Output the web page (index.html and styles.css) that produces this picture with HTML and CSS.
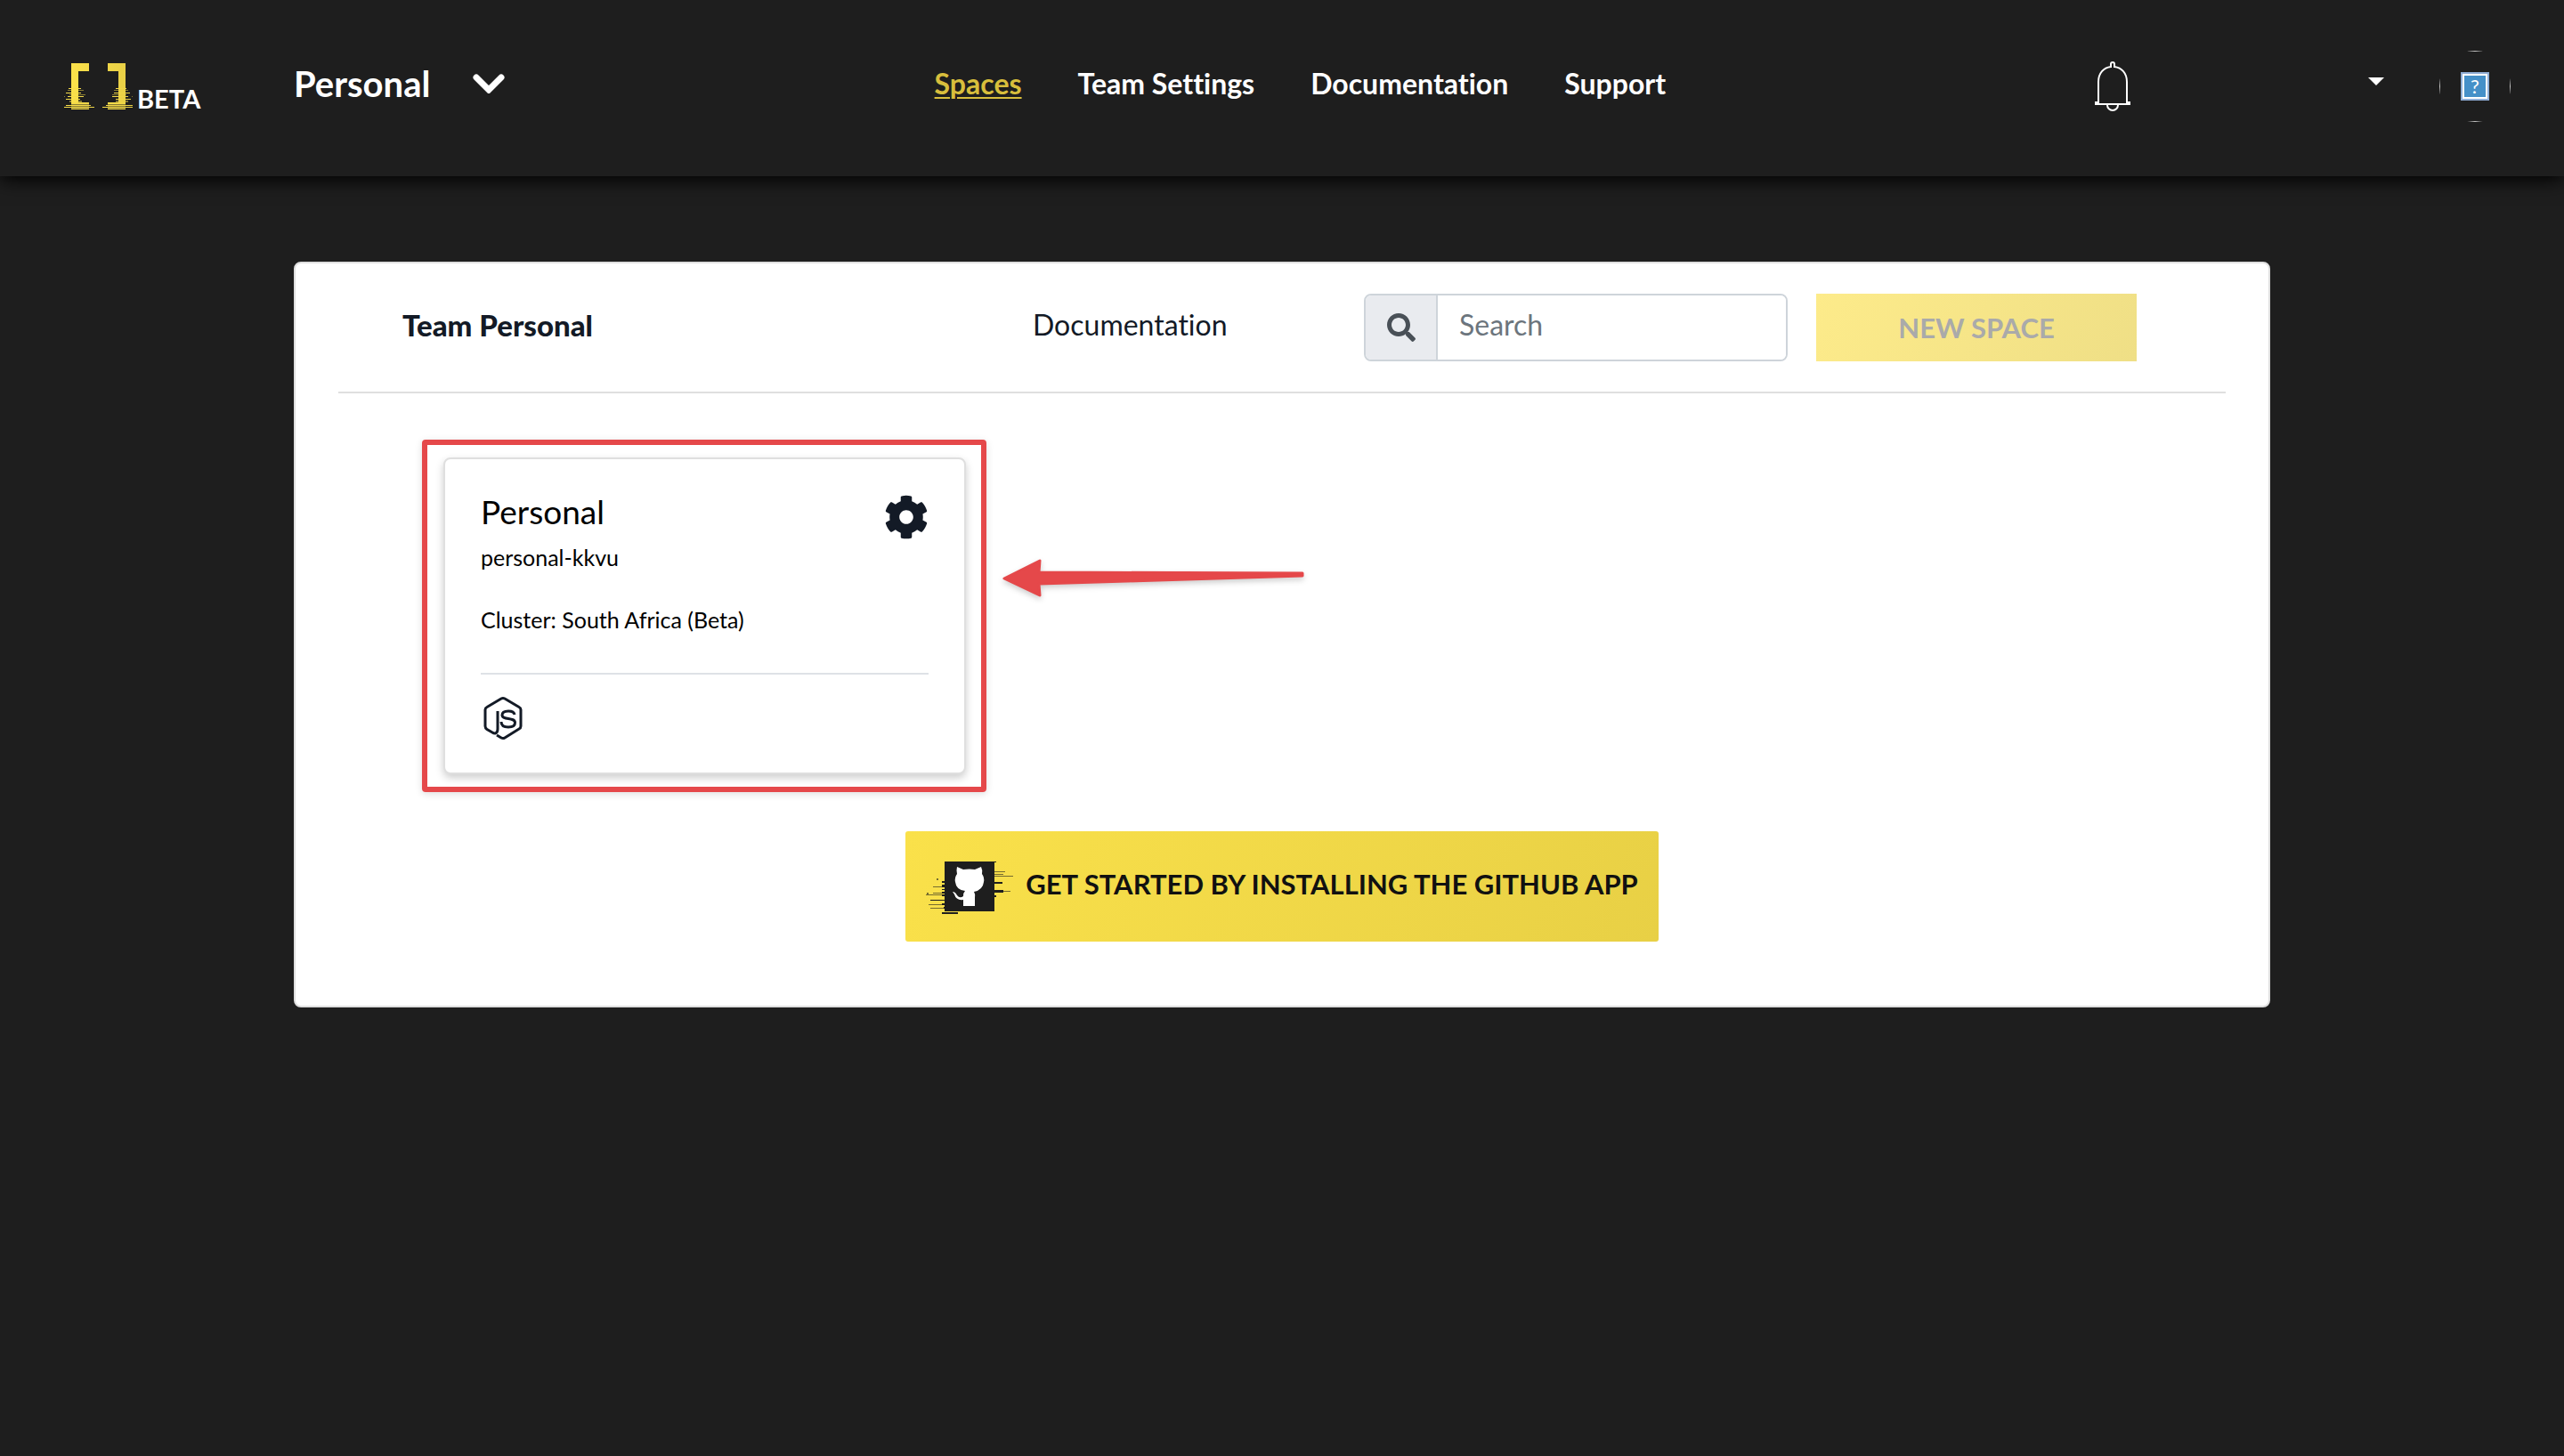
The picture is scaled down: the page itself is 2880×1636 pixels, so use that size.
FILE: index.html
```
<!DOCTYPE html>
<html lang="en">
<head>
<meta charset="utf-8">
<title>Spaces</title>
<link rel="stylesheet" href="styles.css">
</head>
<body>
<header class="topbar">
  <a class="brand" href="#" aria-label="Home">
    <svg class="brand-mark" viewBox="0 0 84 54" aria-hidden="true">
      <defs><linearGradient id="gold" x1="0" x2="1"><stop offset="0" stop-color="#fbe14a"/><stop offset="1" stop-color="#e9d046"/></linearGradient></defs>
      <g fill="url(#gold)">
        <path d="M10 1h20v9H18v35h-8zM51 1h20v44h-8V10H51z"/>
        <path d="M7 29h14v1H7zM4 34h17v1H4zM6 38h18v1H6zM4 41h16v1H4zM10 45h20v2H10zM4 48h28v1H4zM2 50h34v1H2zM10 52h20v1H10z"/>
        <path d="M60 29h12v1H60zM58 34h18v1H58zM56 38h18v1H56zM60 41h17v1H60zM51 45h20v2H51zM49 48h30v1H49zM45 50h34v1H45zM51 52h20v1H51z"/>
        <path opacity=".5" d="M6 31h18v1H6zM2 38h1v1H2zM8 36h18v1H8zM8 43h14v2H8zM10 47h20v5H10zM58 31h16v1H58zM78 38h1v1h-1zM56 36h16v1H56zM60 43h14v2H60zM51 47h20v5H51z"/>
      </g>
    </svg>
    <span class="brand-tag">BETA</span>
  </a>
  <button class="team-switch" type="button">Personal
    <svg class="chevron" viewBox="0 0 36 22" aria-hidden="true"><path d="M4 4l14 14L32 4"/></svg>
  </button>
  <nav class="nav">
    <a class="nav-link active" href="#">Spaces</a>
    <a class="nav-link" href="#">Team Settings</a>
    <a class="nav-link" href="#">Documentation</a>
    <a class="nav-link" href="#">Support</a>
  </nav>
  <div class="account">
    <button class="icon-button" type="button" aria-label="Notifications">
      <svg class="bell" viewBox="0 0 42 56" aria-hidden="true"><path d="M5 46V23C5 13 11 7 19 6V3a2 2 0 0 1 4 0v3c8 1 14 7 14 17v23h3v2H2v-2z"/><path d="M15 49a6 6 0 0 0 12 0"/></svg>
    </button>
    <button class="profile" type="button" aria-label="Account menu">
      <span class="caret"></span>
      <span class="avatar"><span class="avatar-frame"><span class="avatar-missing">?</span></span></span>
    </button>
  </div>
</header>
<main class="panel">
  <div class="toolbar">
    <h1 class="title">Team Personal</h1>
    <a class="doc-link" href="#">Documentation</a>
    <div class="search">
      <label class="search-label" for="search" aria-label="Search"><svg class="search-icon" viewBox="0 0 512 512" aria-hidden="true"><path d="M505 442.700L405.300 343c-4.500-4.500-10.600-7-17-7H372c27.600-35.300 44-79.700 44-128C416 93.100 322.900 0 208 0S0 93.100 0 208s93.100 208 208 208c48.300 0 92.700-16.400 128-44v16.300c0 6.400 2.500 12.500 7 17l99.700 99.700c9.400 9.400 24.600 9.400 33.900 0l28.300-28.300c9.400-9.400 9.400-24.600.1-34zM208 336c-70.700 0-128-57.200-128-128 0-70.700 57.200-128 128-128 70.700 0 128 57.200 128 128 0 70.700-57.200 128-128 128z"/></svg></label>
      <input class="search-input" id="search" type="text" placeholder="Search">
    </div>
    <button class="new-space" type="button" disabled>NEW SPACE</button>
  </div>
  <section class="spaces">
    <div class="highlight">
      <article class="card">
        <div class="card-head">
          <h2 class="card-title">Personal</h2>
          <button class="icon-button" type="button" aria-label="Space settings"><svg class="gear" viewBox="0 0 512 512" aria-hidden="true"><path d="M487.400 315.700l-42.600-24.600c4.300-23.200 4.300-47 0-70.200l42.600-24.600c4.900-2.800 7.100-8.600 5.500-14-11.100-35.600-30-67.800-54.700-94.600-3.800-4.100-10-5.100-14.800-2.300L380.800 110c-17.900-15.400-38.500-27.300-60.800-35.100V25.800c0-5.600-3.900-10.500-9.400-11.700-36.700-8.200-74.300-7.800-109.200 0-5.500 1.200-9.400 6.100-9.400 11.700V75c-22.200 7.900-42.800 19.800-60.800 35.100L88.700 85.500c-4.900-2.800-11-1.900-14.800 2.300-24.700 26.700-43.600 58.900-54.700 94.600-1.700 5.400.6 11.200 5.500 14L67.300 221c-4.300 23.200-4.300 47 0 70.200l-42.600 24.600c-4.900 2.800-7.100 8.600-5.500 14 11.100 35.600 30 67.800 54.700 94.600 3.800 4.100 10 5.100 14.800 2.300l42.600-24.600c17.900 15.400 38.500 27.300 60.800 35.100v49.200c0 5.600 3.900 10.500 9.400 11.700 36.700 8.200 74.300 7.800 109.200 0 5.500-1.200 9.400-6.100 9.400-11.700v-49.200c22.200-7.900 42.800-19.800 60.800-35.100l42.600 24.600c4.900 2.800 11 1.900 14.800-2.300 24.700-26.700 43.600-58.900 54.700-94.600 1.500-5.500-.7-11.300-5.600-14.100zM256 336c-44.100 0-80-35.900-80-80s35.900-80 80-80 80 35.900 80 80-35.900 80-80 80z"/></svg></button>
        </div>
        <p class="card-text">personal-kkvu</p>
        <p class="card-text">Cluster: South Africa (Beta)</p>
        <div class="card-foot">
          <svg class="node" viewBox="0 0 44 50" role="img" aria-label="Node.js"><path d="M16 17v20c0 5-3 6-6 4l-6-3.500Q2 36 2 34V15.500Q2 13.500 4 12.500L20 3q2-1.200 4 0l16 9.500q2 1 2 3V34q0 2-2 3L24 47q-2 1.200-4 0l-5-3"/><path d="M35 21c-.5-3-3-4-7-4-4.500 0-7 1.500-7 4.500 0 6 14.500 2 14.500 8.500 0 3.500-3 5-7.500 5-5 0-8-2-8-6"/></svg>
        </div>
      </article>
      <svg class="arrow" viewBox="0 0 340 44" aria-hidden="true"><path d="M3 22L43 2l-1 13 296 1v3L42 28l1 13z"/></svg>
    </div>
  </section>
  <a class="github" href="#">
    <svg class="github-icon" viewBox="0 0 100 62" aria-hidden="true">
      <path fill="#1e1e1e" d="M21 3h56v56H21zM18 25h4v2h-4zM18 29h4v3h-4zM18 34h4v1h-4zM18 37h4v2h-4zM18 40h4v2h-4zM5 46h16v1H5zM18 50h4v2h-4zM20 54h2v2h-2zM18 60h18v2H18zM76 26h10v2H76zM76 35h11v3H76zM76 41h3v2h-3zM76 3h3v1h-3z"/>
      <path fill="#1e1e1e" opacity=".6" d="M8 31h13v1H8zM8 38h13v1H8zM0 40h20v1H0zM3 51h18v1H3zM5 55h16v1H5zM76 14h13v1H76zM76 17h11v1H76zM76 19h22v1H76zM85 36h10v1H85zM12 22h2v2h-2zM1 38h2v2H1z"/>
      <path fill="#fff" d="M35 9l7 3q7-1 13 0l7-3q2 4 1 8 3 4 2 9-1 9-11 11 2 3 1 7v9H42v-7q-8 1-10-6l-2-3q3 0 5 4 3 4 7 1 0-4 2-6-10-1-11-10-1-5 2-9-1-4 0-8z"/>
    </svg>
    <span class="github-text">GET STARTED BY INSTALLING THE GITHUB APP</span>
  </a>
</main>
</body>
</html>
```

FILE: styles.css
```
* { box-sizing: border-box; }
body {
  margin: 0;
  background: #1e1e1e;
  color: #131a26;
  font: 32px/48px Lato, "Open Sans", sans-serif;
  font-variant-ligatures: no-common-ligatures;
}
h1, h2, p { margin: 0; }
a { color: inherit; text-decoration: none; }
button { padding: 0; border: 0; background: none; color: inherit; font: inherit; }
svg { display: block; }

.topbar {
  display: grid;
  grid-template-columns: 228px 3fr auto 4fr;
  align-items: center;
  column-gap: 32px;
  height: 198px;
  padding: 0 60px 4px 70px;
  color: #fff;
  box-shadow: 0 4px 20px #000;
}
.brand { display: flex; align-items: flex-end; }
.brand-mark { width: 84px; height: 54px; }
.brand-tag { font-size: 29px; font-weight: 700; line-height: 26px; }
.team-switch { display: flex; align-items: center; gap: 48px; padding-bottom: 6px; font-size: 40px; font-weight: 700; }
.chevron { width: 36px; height: 22px; fill: none; stroke: #fff; stroke-width: 7; stroke-linecap: round; }
.nav { display: flex; gap: 63px; padding-bottom: 6px; font-weight: 700; }
.active { color: #d8be3c; text-decoration: underline; text-decoration-thickness: 2px; text-underline-offset: 3px; }
.account { display: flex; align-items: center; justify-content: space-between; padding-left: 49%; }
.bell { width: 42px; height: 56px; fill: none; stroke: #fff; stroke-width: 2; }
.profile { display: flex; align-items: center; gap: 62px; }
.caret { margin-bottom: 12px; border: 9px solid transparent; border-top-color: #fff; border-bottom: 0; }
.avatar { width: 80px; height: 80px; border-radius: 50%; overflow: hidden; }
.avatar-frame {
  display: grid;
  place-items: center;
  height: 100%;
  border: 1px solid #c8c8c8;
}
.avatar-missing {
  width: 32px;
  height: 32px;
  border: 2px solid #90aed6;
  outline: 2px solid #fff;
  outline-offset: -4px;
  background: #4590c8;
  color: #fff;
  font-size: 22px;
  line-height: 28px;
}

.panel {
  display: flow-root;
  max-width: 2220px;
  margin: 96px auto 0;
  padding: 34px 48px 72px;
  border: 2px solid #dfdfdf;
  border-radius: 8px;
  background: #fff;
}
.toolbar {
  display: grid;
  grid-template-columns: 1fr 340px 476px 360px;
  align-items: center;
  column-gap: 32px;
  padding: 0 100px 34px 72px;
  border-bottom: 2px solid #dfdfdf;
}
.title { padding-bottom: 6px; font-size: 33px; font-weight: 900; }
.doc-link { padding-bottom: 6px; }
.search { display: flex; height: 76px; border: 2px solid #ced4da; border-radius: 8px; overflow: hidden; }
.search-label { display: grid; place-items: center; width: 81px; border-right: 2px solid #ced4da; background: #e9ebef; }
.search-icon { width: 32px; height: 32px; fill: #495057; }
.search-input { flex: 1; min-width: 0; padding: 0 24px 6px; border: 0; background: #fff; font: inherit; }
.search-input::placeholder { color: #6c757d; opacity: 1; }
.new-space { height: 76px; background: linear-gradient(120deg, #fdeb8a, #efdf86); color: #aaa; font-size: 31px; font-weight: 700; }

.spaces { padding: 52px 94px 0; }
.highlight {
  position: relative;
  width: 634px;
  padding: 14px 17px 14px 18px;
  border: 6px solid #e5484a;
  border-radius: 4px;
  box-shadow: 0 2px 8px #0002;
}
.card {
  padding: 40px;
  padding-bottom: 36px;
  border: 2px solid #dfdfdf;
  border-radius: 8px;
  background: #fff;
  color: #000;
  box-shadow: 0 4px 10px #0003;
}
.card-head { display: flex; justify-content: space-between; margin-bottom: 2px; }
.card-title { font-size: 37px; font-weight: 400; line-height: 38px; }
.gear { width: 50px; height: 50px; fill: #131a26; }
.card-text { margin-bottom: 34px; font-size: 25px; line-height: 36px; }
.card-foot { margin-top: 42px; padding: 24px 3px 0; border-top: 2px solid #dee2e6; }
.node { width: 44px; height: 50px; fill: none; stroke: #131a26; stroke-width: 3; }
.arrow {
  position: absolute;
  top: 128px;
  left: 645px;
  width: 340px;
  height: 44px;
  fill: #e5484a;
  stroke: #e5484a;
  stroke-width: 3;
  stroke-linejoin: round;
  filter: drop-shadow(0 3px 3px #0003);
}
.github {
  display: flex;
  align-items: center;
  gap: 12px;
  width: fit-content;
  height: 124px;
  margin: 44px auto 0;
  padding: 0 23px;
  border-radius: 3px;
  background: linear-gradient(120deg, #fae14a, #e8d045);
  color: #111;
  font-size: 31px;
  font-weight: 700;
}
.github-icon { width: 100px; height: 62px; }
.github-text { padding-bottom: 6px; }
```
